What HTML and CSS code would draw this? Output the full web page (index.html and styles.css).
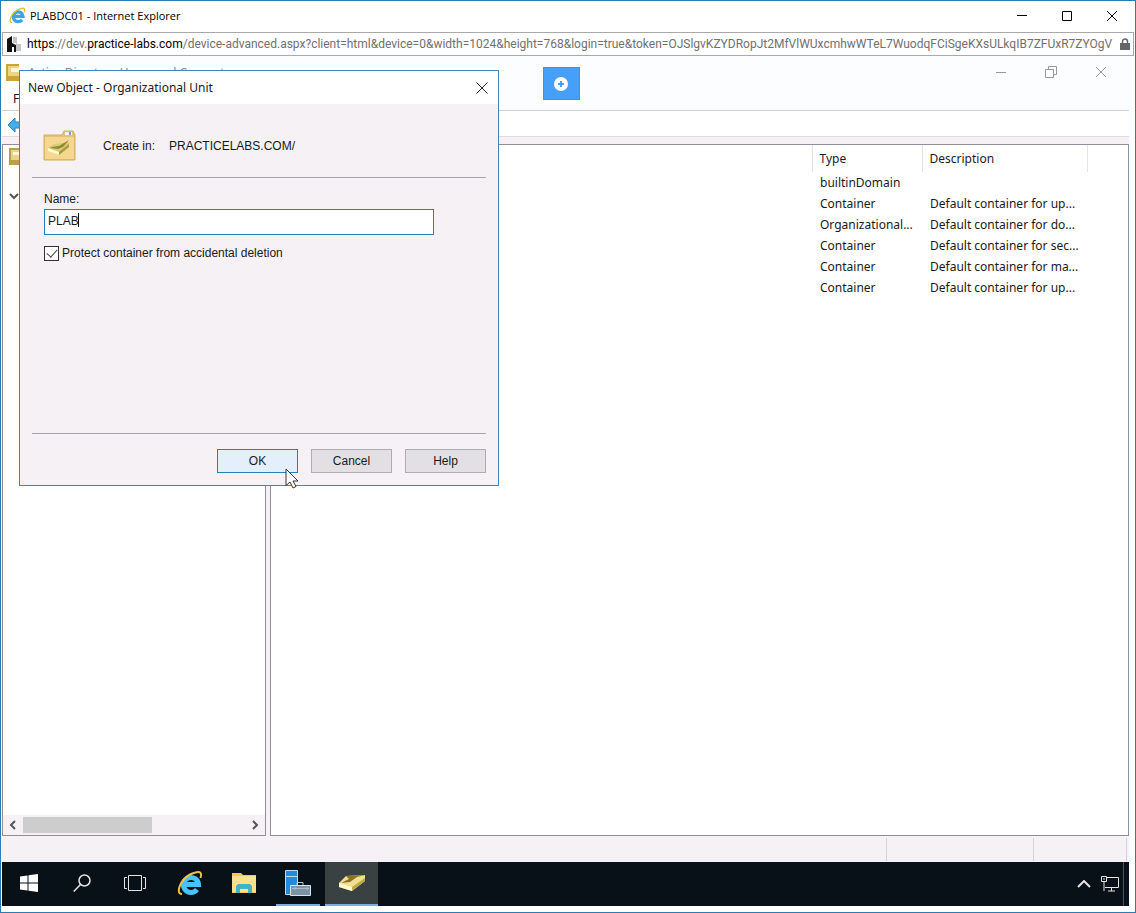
FILE: index.html
```html
<!DOCTYPE html>
<html lang="en">
<head>
    <meta charset="UTF-8">
    <meta name="viewport" content="width=device-width, initial-scale=1.0">
    <title>PLABDC01 - Internet Explorer</title>
    <link rel="stylesheet" href="styles.css">
</head>
<body>
    <div class="browser">
        <header class="browser-title">
            <svg class="browser-icon" viewBox="0 0 26 26">
                <path d="M8 14.500h13.500a7.500 7.500 0 1 0-1.500 5" fill="none" stroke="#3aa5e3" stroke-width="5"/>
                <path d="M5 24C-2 24 3 10 13 4.500 20 1 26 0 23.500 8" fill="none" stroke="#e9bd3a" stroke-width="2"/>
            </svg>
            <h1>PLABDC01 - Internet Explorer</h1>
            <div class="window-buttons">
                <button aria-label="Minimize"><svg viewBox="0 0 12 12"><path d="M1 5.500h10"/></svg></button>
                <button aria-label="Maximize"><svg viewBox="0 0 12 12"><path d="M1.500 1.500h9v9h-9z"/></svg></button>
                <button aria-label="Close"><svg viewBox="0 0 12 12"><path d="M1 1l10 10M11 1L1 11"/></svg></button>
            </div>
        </header>
        <div class="address">
            <svg class="site-icon" viewBox="0 0 14 16">
                <path d="M6 1h4v7h4v7H9V7H6z" fill="#c4c4c4"/>
                <path d="M0 3l5-3v7l4 2v7H7v-5H5v5H0z" fill="#111"/>
            </svg>
            <div class="url"><b>https</b>://dev.<b>practice-labs.com</b>/device-advanced.aspx?client=html&amp;device=0&amp;width=1024&amp;height=768&amp;login=true&amp;token=OJSlgvKZYDRopJt2MfVlWUxcmhwWTeL7WuodqFCiSgeKXsULkqIB7ZFUxR7ZYOgV</div>
            <svg class="lock" viewBox="0 0 10 12">
                <path d="M2.500 6V3.500a2.500 2.500 0 0 1 5 0V6" fill="none" stroke="#666" stroke-width="1.500"/>
                <path d="M0 5h10v7H0z" fill="#666"/>
            </svg>
        </div>

        <main class="desktop">
            <!-- management console -->
            <section class="console">
                <div class="console-top">
                    <div class="console-title">
                        <svg class="book" viewBox="0 0 13 17">
                            <path d="M0 0h13v17H0z" fill="#c9a637"/>
                            <path d="M2 2h11v10H2z" fill="#ecd57a"/>
                            <path d="M5 4h8v4H5z" fill="#fff8dc"/>
                        </svg>
                        <span>Active Directory Users and Computers</span>
                        <div class="window-buttons faded">
                            <button aria-label="Minimize"><svg viewBox="0 0 12 12"><path d="M1 6.500h10"/></svg></button>
                            <button aria-label="Restore"><svg viewBox="0 0 12 12"><path d="M.500 3.500h8v8h-8zM3.500 3.500v-3h8v8h-3"/></svg></button>
                            <button aria-label="Close"><svg viewBox="0 0 12 12"><path d="M1 1l10 10M11 1L1 11"/></svg></button>
                        </div>
                    </div>
                    <div class="menu">File</div>
                </div>
                <div class="toolbar">
                    <svg viewBox="0 0 16 16"><path d="M1 8l7-7v4h8v6H8v4z" fill="#45adea" stroke="#2b83bd"/></svg>
                </div>
                <div class="panes">
                    <nav class="tree">
                        <div class="tree-view">
                            <svg class="book" viewBox="0 0 13 17">
                                <path d="M0 0h13v17H0z" fill="#b8a04a"/>
                                <path d="M2 2h11v10H2z" fill="#e5d48a"/>
                                <path d="M4 4h9v3H4z" fill="#fff8dc"/>
                            </svg>
                            <svg class="arrow" viewBox="0 0 10 8"><path d="M1 2l4 4 4-4"/></svg>
                        </div>
                        <div class="scrollbar">
                            <svg viewBox="0 0 8 10"><path d="M6 1L2 5l4 4"/></svg>
                            <div class="track"><div class="thumb"></div></div>
                            <svg viewBox="0 0 8 10"><path d="M2 1l4 4-4 4"/></svg>
                        </div>
                    </nav>
                    <div class="list">
                        <table>
                            <thead>
                                <tr><th class="name"></th><th class="type">Type</th><th class="description">Description</th><th class="rest"></th></tr>
                            </thead>
                            <tbody>
                                <tr><td></td><td>builtinDomain</td><td></td></tr>
                                <tr><td></td><td>Container</td><td>Default container for up...</td></tr>
                                <tr><td></td><td>Organizational...</td><td>Default container for do...</td></tr>
                                <tr><td></td><td>Container</td><td>Default container for sec...</td></tr>
                                <tr><td></td><td>Container</td><td>Default container for ma...</td></tr>
                                <tr><td></td><td>Container</td><td>Default container for up...</td></tr>
                            </tbody>
                        </table>
                    </div>
                </div>
                <div class="status"><span></span><span></span></div>
            </section>

            <footer class="taskbar">
                <button aria-label="Start">
                    <svg class="start" viewBox="0 0 18 18"><path d="M0 2.500L7.500 1.500v7H0zM8.500 1.300L18 0v8.500H8.500zM0 9.500h7.500v7L0 15.500zM8.500 9.500H18V18L8.500 16.700z" fill="#fff"/></svg>
                </button>
                <button aria-label="Search">
                    <svg class="search" viewBox="0 0 18 18"><circle cx="11.500" cy="6.500" r="5.500"/><path d="M7.500 10.500L.700 17.500"/></svg>
                </button>
                <button aria-label="Task view">
                    <svg class="task-view" viewBox="0 0 22 16"><path d="M4.500.500h13v15h-13zM3 2.500H.500v11H3M19 2.500h2.500v11H19"/></svg>
                </button>
                <button class="pinned" aria-label="Internet Explorer">
                    <svg class="app" viewBox="0 0 26 26">
                        <path d="M8 14.500h13.500a7.500 7.500 0 1 0-1.500 5" fill="none" stroke="#49c3f5" stroke-width="5"/>
                        <path d="M5 24C-2 24 3 10 13 4.500 20 1 26 0 23.500 8" fill="none" stroke="#e8c545" stroke-width="2"/>
                    </svg>
                </button>
                <button class="folder" aria-label="File Explorer">
                    <svg class="app" viewBox="0 0 26 26">
                        <path d="M1 3h9l2 2h13v18H1z" fill="#f0c95c"/>
                        <path d="M1 6h24v16H1z" fill="#fbe08f"/>
                        <path d="M5 23v-7l2-2h12l2 2v7h-4v-4H9v4z" fill="#45b4c9"/>
                    </svg>
                </button>
                <button class="running" aria-label="Server Manager">
                    <svg class="server" viewBox="0 0 28 28">
                        <path d="M1.500 1.500h12v24h-12z" fill="#2589dc" stroke="#b6dbf5"/>
                        <path d="M2 7.500h11" stroke="#b6dbf5"/>
                        <path d="M13 16v-2.500h6V16" fill="none" stroke="#b9c8d1"/>
                        <path d="M6.500 16.500h20v10h-20z" fill="#7995a5" stroke="#d8e4eb"/>
                        <path d="M8 19.500h17M11 18v3M23 18v3" stroke="#a9bcc7"/>
                    </svg>
                </button>
                <button class="active" aria-label="Active Directory Users and Computers">
                    <svg class="directory" viewBox="0 0 26 18">
                        <path d="M0 9L7 2 26 1v6L13 17 0 13z" fill="#eee095"/>
                        <path d="M0 9l13 4v4L0 13z" fill="#fff8c8"/>
                        <path d="M13 13L26 4v3L13 17z" fill="#c1a947"/>
                        <path d="M7 2l19-1-8 2-7 5-9 1 8-4z" fill="#8a7424"/>
                    </svg>
                </button>
                <div class="tray">
                    <svg class="chevron" viewBox="0 0 14 8"><path d="M1 7l6-6 6 6"/></svg>
                    <svg class="network" viewBox="0 0 18 16"><path d="M6 1.500h11.500v10H4M.500.500h5v5h-5zM2 3h2M3 6v9M10.500 12v3M7 15h7"/></svg>
                    <div class="peek"></div>
                </div>
            </footer>

            <button class="toggle" aria-label="Show toolbar">
                <svg viewBox="0 0 14 14"><circle cx="7" cy="7" r="7" fill="#fff"/><path d="M7 4v6M4 7h6" stroke="#469ff9" stroke-width="2"/></svg>
            </button>

            <form class="dialog">
                <div class="dialog-title">
                    <h2>New Object - Organizational Unit</h2>
                    <button type="button" aria-label="Close"><svg viewBox="0 0 12 12"><path d="M.500.500l11 11M11.500.500l-11 11"/></svg></button>
                </div>
                <div class="location">
                    <svg viewBox="0 0 34 32">
                        <path d="M1 5h18l2-4h9l2 4v25H1z" fill="#e7c272" stroke="#d3ae5d"/>
                        <path d="M22 2h7v3h-7z" fill="#f8f8f8"/>
                        <path d="M26 2h2v3h-2z" fill="#6d9fd0"/>
                        <path d="M2 7h29v22H2z" fill="#f6d78f"/>
                        <path d="M5 18l6-4 15-2v5L16 25 5 21z" fill="#d9cd72"/>
                        <path d="M5 18l11 4v3L5 21z" fill="#fff9cb"/>
                        <path d="M16 22l10-8v3l-10 8z" fill="#a79a45"/>
                        <path d="M9 17l7-1 10-6-6 7-5 2-8-1z" fill="#8f8938"/>
                    </svg>
                    <span class="create-in">Create in:</span>
                    <span>PRACTICELABS.COM/</span>
                </div>
                <div class="fields">
                    <label for="name">Name:</label>
                    <div class="name-box">
                        <input type="text" id="name" value="PLAB">
                        <span class="caret"></span>
                    </div>
                    <div class="protect">
                        <input type="checkbox" id="protect" checked>
                        <label for="protect">Protect container from accidental deletion</label>
                    </div>
                </div>
                <div class="actions">
                    <button type="button" class="ok">OK</button>
                    <button type="button">Cancel</button>
                    <button type="button">Help</button>
                </div>
                <svg class="cursor" viewBox="0 0 14 21"><path d="M1 1v16.500l4-3.500 3 6 3-1.500-3-5.500h5z" fill="#fff" stroke="#333"/></svg>
            </form>
        </main>
    </div>
</body>
</html>
```

FILE: styles.css
```css
* {
    box-sizing: border-box;
}

body {
    margin: 0;
    font-family: "Noto Sans", "Open Sans", sans-serif;
    font-size: 12px;
    color: #1a1a1a;
    background-color: #fff;
}

h1, h2 {
    margin: 0;
    font-size: 12px;
    font-weight: normal;
}

button {
    padding: 0;
    border: none;
    background: none;
    font: inherit;
    color: inherit;
}

svg {
    display: block;
    flex: none;
}

.browser {
    display: flex;
    flex-direction: column;
    min-height: 100vh;
    border: 1px solid #2b7cb3;
    padding: 0 1px 6px;
}

/* browser title bar */
.browser-title {
    display: flex;
    align-items: center;
    height: 31px;
    padding: 0 10px 2px 7px;
    color: #000;
}

.browser-title h1 {
    font-family: "Open Sans", sans-serif;
    font-size: 11px;
}

.browser-icon {
    width: 17px;
    height: 17px;
    margin-right: 4px;
}

.window-buttons {
    display: flex;
    gap: 21px;
    margin-left: auto;
}

.window-buttons button {
    display: flex;
    justify-content: center;
    width: 24px;
}

.window-buttons svg {
    width: 12px;
    height: 12px;
    fill: none;
    stroke: #000;
}

.address {
    display: flex;
    align-items: center;
    height: 24px;
    padding: 0 3px 0 4px;
    border: 1px solid #a9a9a9;
    color: #707070;
}

.site-icon {
    width: 14px;
    height: 16px;
    margin-right: 6px;
}

.url {
    flex: 1;
    min-width: 0;
    overflow: hidden;
    font-family: Roboto, sans-serif;
    white-space: nowrap;
}

.url b {
    font-weight: normal;
    color: #000;
}

.lock {
    width: 10px;
    height: 12px;
    margin-left: 7px;
}

.desktop {
    position: relative;
    display: flex;
    flex-direction: column;
    flex: 1;
    margin-right: 5px;
}

/* console window */
.console {
    display: flex;
    flex-direction: column;
    flex: 1;
    background-color: #f5f1f5;
}

.console-top {
    height: 55px;
    background-color: #fcfdff;
    border-bottom: 1px solid #cfcfd3;
}

.console-title {
    display: flex;
    align-items: center;
    height: 34px;
    padding: 0 16px 2px 4px;
    color: #888;
}

.book {
    width: 13px;
    height: 17px;
}

.console-title span {
    margin-left: 9px;
}

.faded {
    gap: 26px;
}

.faded svg {
    stroke: #999;
}

.menu {
    padding-left: 11px;
    color: #1a1a1a;
}

.toolbar {
    height: 26px;
    padding: 6px 5px;
    background-color: #fff;
    border-bottom: 1px solid #dcdcdc;
}

.toolbar svg {
    width: 16px;
    height: 16px;
}

.panes {
    display: flex;
    gap: 4px;
    flex: 1;
    margin-top: 7px;
}

.tree, .list {
    background-color: #fff;
    border: 1px solid #8f8e99;
}

.tree {
    display: flex;
    flex-direction: column;
    width: 264px;
}

.tree-view {
    flex: 1;
    padding: 3px 6px;
}

.arrow {
    width: 10px;
    height: 8px;
    margin-top: 27px;
}

.arrow, .scrollbar svg {
    fill: none;
    stroke: #555;
    stroke-width: 2;
}

.scrollbar {
    display: flex;
    align-items: center;
    height: 20px;
    padding: 0 6px;
    background-color: #f5f1f5;
}

.scrollbar svg {
    width: 8px;
    height: 10px;
}

.track {
    flex: 1;
    padding: 0 6px;
}

.thumb {
    width: 58%;
    height: 16px;
    background-color: #cdcdcd;
}

.list {
    flex: 1;
}

.list table {
    width: 100%;
    border-collapse: collapse;
    table-layout: fixed;
}

th, td {
    height: 21px;
    padding: 0 0 0 8px;
    font-weight: normal;
    line-height: 20px;
    text-align: left;
    white-space: nowrap;
}

th {
    height: 27px;
    padding-left: 7px;
    border-right: 1px solid #e4e4e8;
}

.type {
    width: 110px;
}

.description {
    width: 165px;
}

.rest {
    width: 41px;
    border: none;
}

.status {
    display: flex;
    justify-content: flex-end;
    height: 26px;
    padding: 2px 2px 1px;
}

.status span {
    width: 147px;
    border-left: 1px solid #d6d3d8;
}

.status span:last-child {
    width: 94px;
    border-right: 1px solid #d6d3d8;
}

/* taskbar */
.taskbar {
    display: flex;
    height: 44px;
    background-color: #081018;
}

.taskbar button {
    display: flex;
    align-items: center;
    justify-content: center;
    width: 53px;
    border-bottom: 2px solid transparent;
}

.taskbar .pinned, .taskbar .folder {
    width: 54px;
}

.taskbar .pinned {
    margin-left: 2px;
}

.taskbar .running {
    width: 44px;
    margin: 0 5px;
    border-color: #76b0e0;
}

.taskbar .active {
    background-color: #394142;
    border-color: #76b0e0;
}

.start, .search {
    width: 18px;
    height: 18px;
}

.search, .task-view, .chevron, .network {
    fill: none;
    stroke: #e4e4e4;
}

.search {
    stroke-width: 1.5;
}

.task-view {
    width: 22px;
    height: 16px;
}

.app {
    width: 26px;
    height: 26px;
}

.server {
    width: 28px;
    height: 28px;
}

.directory {
    width: 26px;
    height: 18px;
}

.tray {
    display: flex;
    align-items: center;
    gap: 10px;
    margin-left: auto;
}

.chevron {
    width: 14px;
    height: 8px;
    stroke-width: 2;
}

.network {
    width: 18px;
    height: 16px;
}

.peek {
    width: 6px;
    height: 44px;
    margin-left: -6px;
    border-left: 1px solid #4a5357;
}

/* blue button over the console */
.toggle {
    position: absolute;
    top: 11px;
    left: 48%;
    display: flex;
    align-items: center;
    justify-content: center;
    width: 37px;
    height: 33px;
    background-color: #469ff9;
    border: 1px solid #3f92e8;
}

.toggle svg {
    width: 14px;
    height: 14px;
}

/* new object dialog */
.dialog {
    position: absolute;
    top: 14px;
    left: 17px;
    display: flex;
    flex-direction: column;
    width: 480px;
    height: 416px;
    border: 1px solid #3e86bd;
    background-color: #f5f1f5;
    font-family: "Liberation Sans", Arial, sans-serif;
}

.dialog-title {
    display: flex;
    align-items: center;
    justify-content: space-between;
    height: 33px;
    padding: 0 10px 0 8px;
    background-color: #fff;
    font-family: "Noto Sans", "Open Sans", sans-serif;
}

.dialog-title svg {
    width: 12px;
    height: 12px;
    stroke: #222;
}

.location {
    display: flex;
    align-items: center;
    height: 74px;
    margin: 0 12px;
    padding: 10px 0 0 11px;
    border-bottom: 1px solid #a5a3a8;
}

.location svg {
    width: 34px;
    height: 32px;
}

.create-in {
    width: 66px;
    margin-left: 26px;
}

.fields {
    flex: 1;
    padding: 13px 24px;
}

.fields label {
    line-height: 16px;
}

.name-box {
    position: relative;
    width: 390px;
    margin-top: 2px;
}

.name-box input {
    display: block;
    width: 100%;
    height: 26px;
    padding: 0 3px 3px;
    border: 1px solid #2a80b9;
    outline: none;
    background-color: #fff;
    font: inherit;
    color: #1a1a1a;
}

.caret {
    position: absolute;
    top: 4px;
    left: 34px;
    width: 1px;
    height: 14px;
    background-color: #000;
}

.protect {
    display: flex;
    align-items: center;
    gap: 3px;
    margin-top: 10px;
}

.protect input {
    appearance: none;
    display: flex;
    justify-content: center;
    width: 15px;
    height: 15px;
    margin: 0;
    border: 1px solid #333;
    background-color: #fff;
}

.protect input:checked::before {
    content: "";
    width: 5px;
    height: 9px;
    border: solid #444;
    border-width: 0 1px 1px 0;
    transform: rotate(42deg);
}

.actions {
    display: flex;
    justify-content: flex-end;
    gap: 13px;
    margin: 0 12px;
    padding: 15px 0 12px;
    border-top: 1px solid #a5a3a8;
}

.actions button {
    width: 81px;
    height: 24px;
    border: 1px solid #adadb1;
    background-color: #e2e0e3;
}

.actions .ok {
    border: 1px solid #2a80b9;
    background-color: #e3f0fc;
}

.cursor {
    position: absolute;
    top: 397px;
    left: 265px;
    width: 14px;
    height: 21px;
}
```
